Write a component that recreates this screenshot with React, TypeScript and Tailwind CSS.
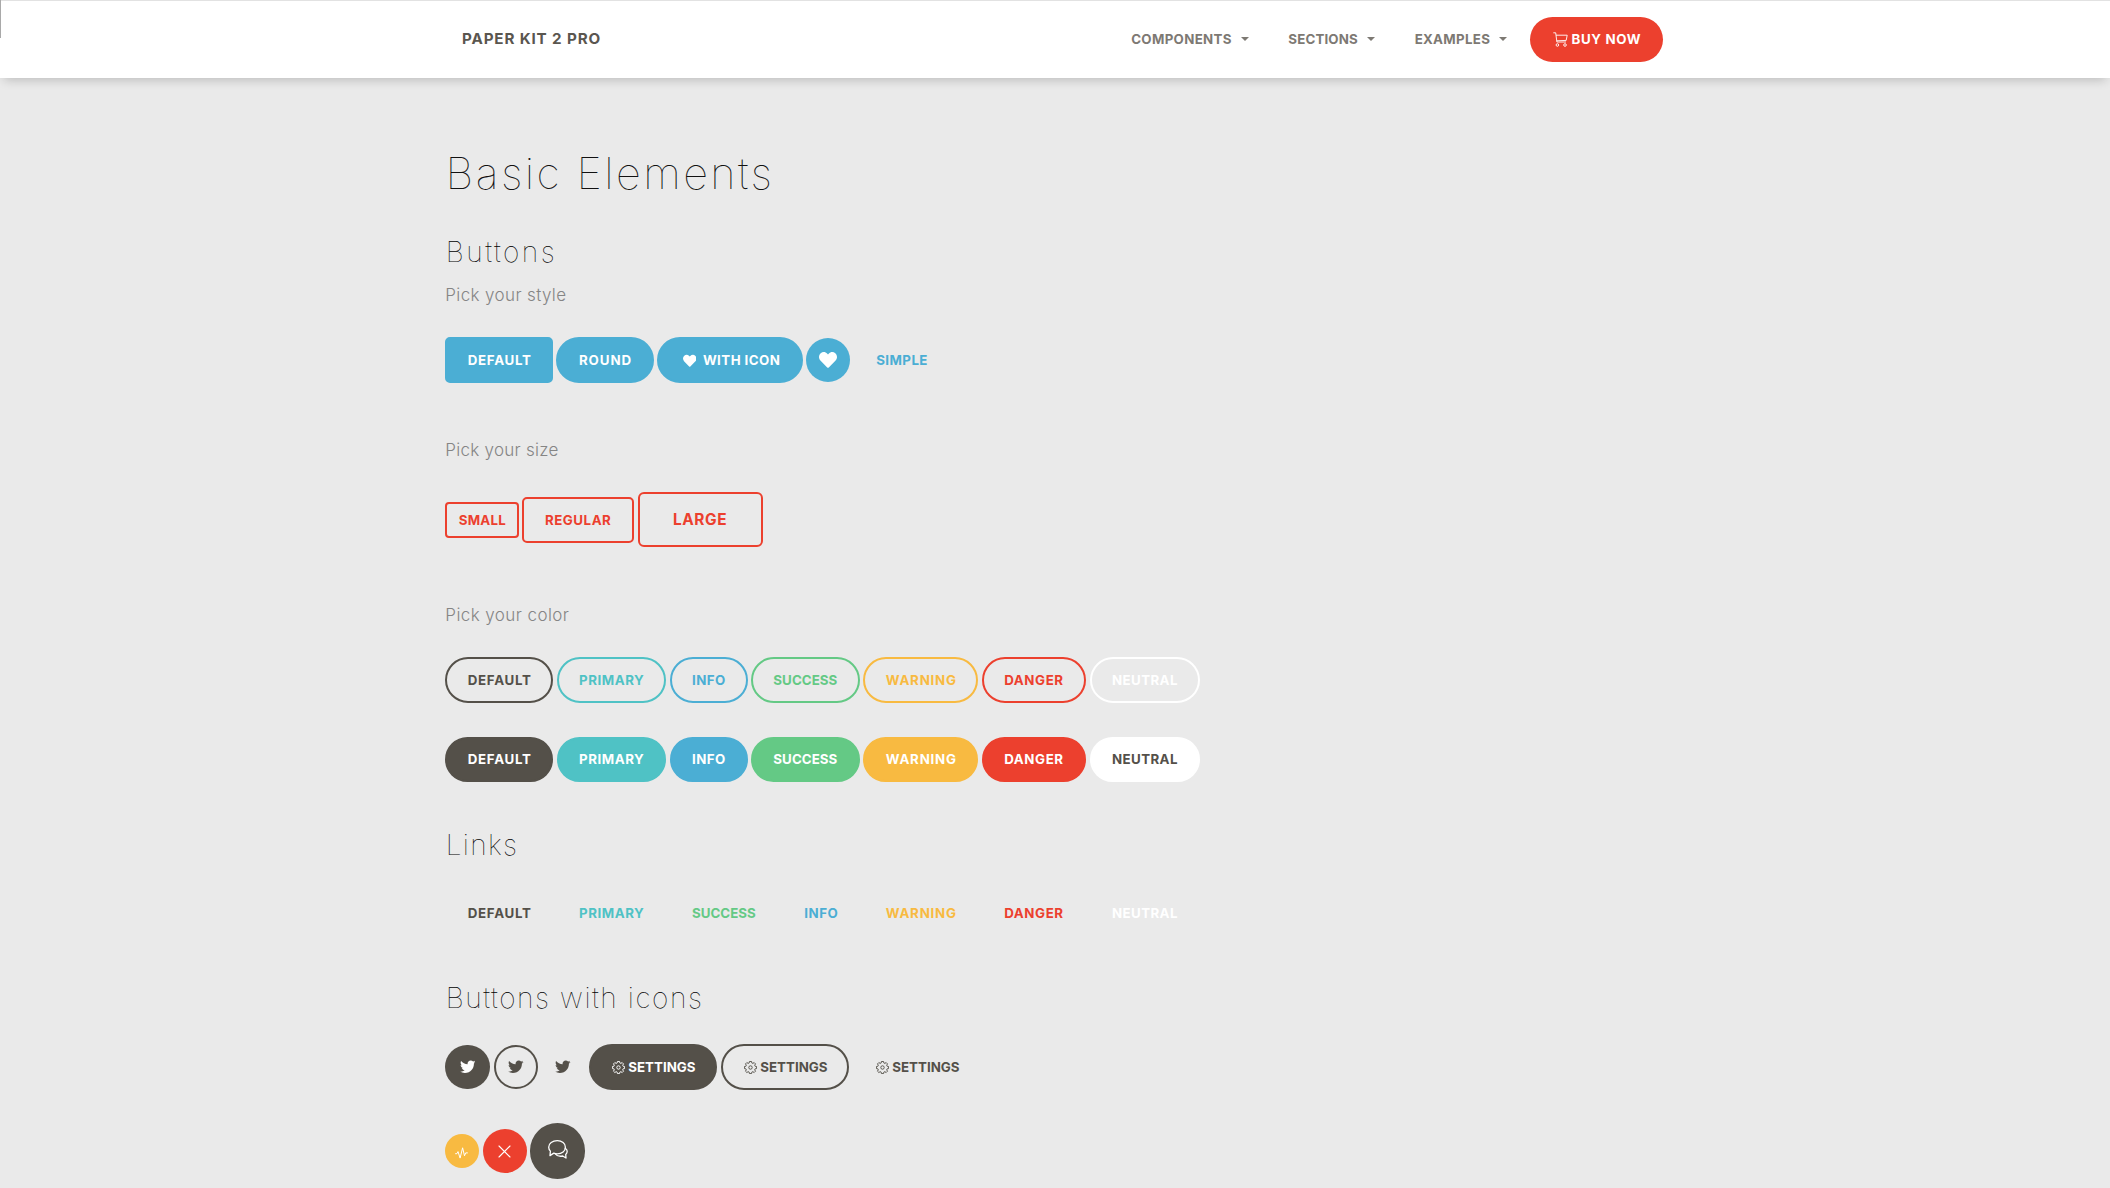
import React from 'react';
import { FaHeart, FaTwitter } from 'react-icons/fa';

const pill = 'flex h-[45.5px] shrink-0 items-center whitespace-nowrap rounded-[23px] border-2 pl-[20.4px] pt-[2px]';
const circle = 'flex size-[44.5px] shrink-0 items-center justify-center rounded-full';

type Item = { label: string; size: string; outline: string; solid: string; text: string };

const items: Record<string, Item> = {
  default: { label: 'DEFAULT', size: 'w-[108px] tracking-[0.74px]', outline: 'border-[#545049]', solid: 'border-[#545049] bg-[#545049] text-white', text: 'text-[#545049]' },
  primary: { label: 'PRIMARY', size: 'w-[109.5px] tracking-[0.54px]', outline: 'border-[#4fc2c5]', solid: 'border-[#4fc2c5] bg-[#4fc2c5] text-white', text: 'text-[#4fc2c5]' },
  info: { label: 'INFO', size: 'w-[78px] tracking-[0.45px]', outline: 'border-[#4baed4]', solid: 'border-[#4baed4] bg-[#4baed4] text-white', text: 'text-[#4baed4]' },
  success: { label: 'SUCCESS', size: 'w-[109px] tracking-[0.04px]', outline: 'border-[#64c985]', solid: 'border-[#64c985] bg-[#64c985] text-white', text: 'text-[#64c985]' },
  warning: { label: 'WARNING', size: 'w-[115px] tracking-[0.8px]', outline: 'border-[#f8ba41]', solid: 'border-[#f8ba41] bg-[#f8ba41] text-white', text: 'text-[#f8ba41]' },
  danger: { label: 'DANGER', size: 'w-[104.5px] tracking-[0.6px]', outline: 'border-[#ec402e]', solid: 'border-[#ec402e] bg-[#ec402e] text-white', text: 'text-[#ec402e]' },
  neutral: { label: 'NEUTRAL', size: 'w-[110px] tracking-[0.4px]', outline: 'border-white', solid: 'border-white bg-white text-[#545049]', text: 'text-white' },
};

const buttonOrder = ['default', 'primary', 'info', 'success', 'warning', 'danger', 'neutral'];
const linkOrder = ['default', 'primary', 'success', 'info', 'warning', 'danger', 'neutral'];

function Cart() {
  return (
    <svg className="h-[15px] w-[15px]" viewBox="0 0 15 15" fill="none" stroke="currentColor" strokeWidth="0.9">
      <path d="M0.3 0.8h2.4l1.2 9.2h9.1M3 3.2h11.2l-1 5.2-9.6.4" />
      <circle cx="4.4" cy="13" r="1.3" />
      <circle cx="12" cy="13" r="1.3" />
    </svg>
  );
}

function Gear() {
  return (
    <svg className="-mt-px size-[13px] shrink-0" viewBox="0 0 16 16" fill="none" stroke="currentColor" strokeWidth="1.15" strokeLinejoin="round">
      <circle cx="8" cy="8" r="2.1" />
      <path d="M6.7.6h2.6l.4 1.9 1.2.5 1.6-1.1 1.7 1.7-1.1 1.6.5 1.2 1.9.4v2.5l-1.9.4-.5 1.2 1.1 1.6-1.7 1.7-1.6-1.1-1.2.5-.4 1.9H6.7l-.4-1.9-1.2-.5-1.6 1.1-1.7-1.7 1.1-1.6-.5-1.2-1.9-.4V6.8l1.9-.4.5-1.2-1.1-1.6 1.7-1.7L5.1 3l1.2-.5z" />
    </svg>
  );
}

function Pulse() {
  return (
    <svg className="mt-1 h-[12px] w-[13px]" viewBox="0 0 13 12" fill="none" stroke="currentColor" strokeWidth="1" strokeLinecap="round" strokeLinejoin="round">
      <path d="M.6 6.7h1.3L3 4.6l2.1 6.5L7.6.8l1.9 8 1.2-2.9h1.7" />
    </svg>
  );
}

function Cross() {
  return (
    <svg className="size-[13px]" viewBox="0 0 13 13" stroke="currentColor" strokeWidth="1.1" strokeLinecap="round">
      <path d="M1 1l11 11M12 1L1 12" />
    </svg>
  );
}

function Chat() {
  return (
    <svg className="-mt-1 h-[19px] w-[20px]" viewBox="0 0 20 19" fill="none" stroke="currentColor" strokeWidth="1.3" strokeLinejoin="round" strokeLinecap="round">
      <path d="M9.3.7c4.7 0 8.1 2.8 8.1 6.5s-3.4 6.6-8.1 6.6c-1.3 0-2.5-.2-3.5-.7L2 15.6l.4-4.5C1.3 10 .7 8.7.7 7.2.7 3.5 4.5.7 9.3.7z" />
      <path d="M17.3 8.2c1.2.8 1.9 1.9 1.9 3.1 0 1.2-.6 2.3-1.5 3.1l.3 3.6-3.3-2c-3 .6-6-.3-7.4-2.2" />
    </svg>
  );
}

function NavItem({ label, className }: { label: string; className: string }) {
  return (
    <a className={`flex items-center ${className}`}>
      {label}
      <span className="-mt-px ml-[9px] size-0 border-x-4 border-t-4 border-x-transparent border-t-[#7d7973]" />
    </a>
  );
}

function H2({ children, className }: { children: React.ReactNode; className: string }) {
  return <h2 className={`h-10 whitespace-nowrap pl-[0.4px] text-[28.2px] font-thin leading-10 text-black ${className}`}>{children}</h2>;
}

function Label({ children, className }: { children: React.ReactNode; className: string }) {
  return <p className={`h-6 text-[17px] font-light leading-6 text-[#858585] ${className}`}>{children}</p>;
}

export default function App() {
  return (
    <div className="h-[1188px] overflow-hidden bg-[#eaeaea] font-['Inter',sans-serif] text-[13.3px] font-bold">
      <header className="relative flex h-[78px] items-center border-t border-[#e2e2e2] bg-white pr-[446.7px] pl-[462px] shadow-[0_6px_10px_-4px_rgba(0,0,0,0.2)]">
        <span className="absolute -top-px left-0 h-[38px] w-px bg-[#a9a9a9]" />
        <span className="text-[15.2px] tracking-[0.86px] text-[#5a564f]">PAPER KIT 2 PRO</span>
        <nav className="ml-auto flex items-center text-[#7d7973]">
          <NavItem label="COMPONENTS" className="w-[157.2px] tracking-[0.34px]" />
          <NavItem label="SECTIONS" className="w-[126.3px] tracking-[0.15px]" />
          <NavItem label="EXAMPLES" className="w-[115.4px] tracking-[0.3px]" />
          <a className="flex h-[45.5px] w-[133.3px] items-center rounded-[23px] bg-[#ec402e] pl-[23px] tracking-[0.6px] text-white">
            <Cart />
            <span className="ml-[3.6px]">BUY NOW</span>
          </a>
        </nav>
      </header>

      <main className="flex flex-col pt-[72px] pl-[445.3px]">
        <h1 className="h-[46px] pl-[0.3px] text-[43.3px] font-thin leading-[46px] tracking-[2.42px] text-[#111]">Basic Elements</h1>

        <H2 className="mt-[36px] tracking-[2.5px]">Buttons</H2>
        <Label className="mt-[11px] tracking-[0.37px]">Pick your style</Label>
        <div className="mt-[30px] flex h-[45.5px] items-center text-white">
          <a className={`${pill} w-[108px] !rounded-[5px] border-[#4baed4] bg-[#4baed4] tracking-[0.74px]`}>DEFAULT</a>
          <a className={`${pill} ml-[3.2px] w-[97.3px] border-[#4baed4] bg-[#4baed4] tracking-[0.94px]`}>ROUND</a>
          <a className={`${pill} ml-[3.5px] w-[145.6px] border-[#4baed4] bg-[#4baed4] !pl-[23.3px] tracking-[0.45px]`}>
            <FaHeart size={13.5} className="-mt-px" />
            <span className="ml-[6.8px]">WITH ICON</span>
          </a>
          <a className={`${circle} ml-[3.1px] bg-[#4baed4]`}>
            <FaHeart size={18} />
          </a>
          <a className="ml-[25.7px] pt-[2px] tracking-[0.45px] text-[#4baed4]">SIMPLE</a>
        </div>

        <Label className="mt-[55.5px] tracking-[0.27px]">Pick your size</Label>
        <div className="mt-[30px] flex h-[55.5px] items-center text-[#ec402e]">
          <a className="flex h-[36.5px] w-[73.8px] items-center rounded-[4px] border-2 border-[#ec402e] pt-[2px] pl-[11.4px] tracking-[0.28px]">SMALL</a>
          <a className="ml-[3.3px] flex h-[45.5px] w-[111.5px] items-center rounded-[5px] border-2 border-[#ec402e] pt-[2px] pl-[20.5px] tracking-[0.54px]">REGULAR</a>
          <a className="ml-[4px] flex h-[55px] w-[125.5px] items-center rounded-[6px] border-2 border-[#ec402e] pl-[33px] text-[15.4px] tracking-[0.6px]">LARGE</a>
        </div>

        <Label className="mt-[55.5px] tracking-[0.42px]">Pick your color</Label>
        <div className="mt-[30px] flex gap-[3.4px]">
          {buttonOrder.map((k) => (
            <a key={k} className={`${pill} ${items[k].size} ${items[k].outline} ${items[k].text}`}>{items[k].label}</a>
          ))}
        </div>
        <div className="mt-[34px] flex gap-[3.4px]">
          {buttonOrder.map((k) => (
            <a key={k} className={`${pill} ${items[k].size} ${items[k].solid}`}>{items[k].label}</a>
          ))}
        </div>

        <H2 className="mt-[43px] tracking-[1.3px]">Links</H2>
        <div className="mt-[25.5px] flex gap-[3.4px]">
          {linkOrder.map((k) => (
            <a key={k} className={`${pill} ${items[k].size} border-transparent ${items[k].text}`}>{items[k].label}</a>
          ))}
        </div>

        <H2 className="mt-[41.5px] tracking-[1.55px]">Buttons with icons</H2>
        <div className="mt-[26.5px] flex h-[45.5px] items-center text-[#545049]">
          <a className={`${circle} bg-[#545049] text-white`}><FaTwitter size={15.5} /></a>
          <a className={`${circle} ml-[4px] border-2 border-[#545049]`}><FaTwitter size={15.5} /></a>
          <a className={`${circle} ml-[2.5px]`}><FaTwitter size={15.5} /></a>
          <a className={`${pill} ml-[4px] w-[128px] border-[#545049] bg-[#545049] tracking-[0.04px] text-white`}>
            <Gear /><span className="ml-[3.5px]">SETTINGS</span>
          </a>
          <a className={`${pill} ml-[4px] w-[128px] border-[#545049] tracking-[0.04px]`}>
            <Gear /><span className="ml-[3.5px]">SETTINGS</span>
          </a>
          <a className={`${pill} ml-[4px] w-[128px] border-transparent tracking-[0.04px]`}>
            <Gear /><span className="ml-[3.5px]">SETTINGS</span>
          </a>
        </div>

        <div className="mt-[34px] flex h-[55px] items-center text-white">
          <a className="flex size-[33.3px] items-center justify-center rounded-full bg-[#f8ba41]"><Pulse /></a>
          <a className={`${circle} ml-[4px] bg-[#ec402e]`}><Cross /></a>
          <a className="ml-[3px] flex size-[55.3px] items-center justify-center rounded-full bg-[#545049]"><Chat /></a>
        </div>
      </main>
    </div>
  );
}
